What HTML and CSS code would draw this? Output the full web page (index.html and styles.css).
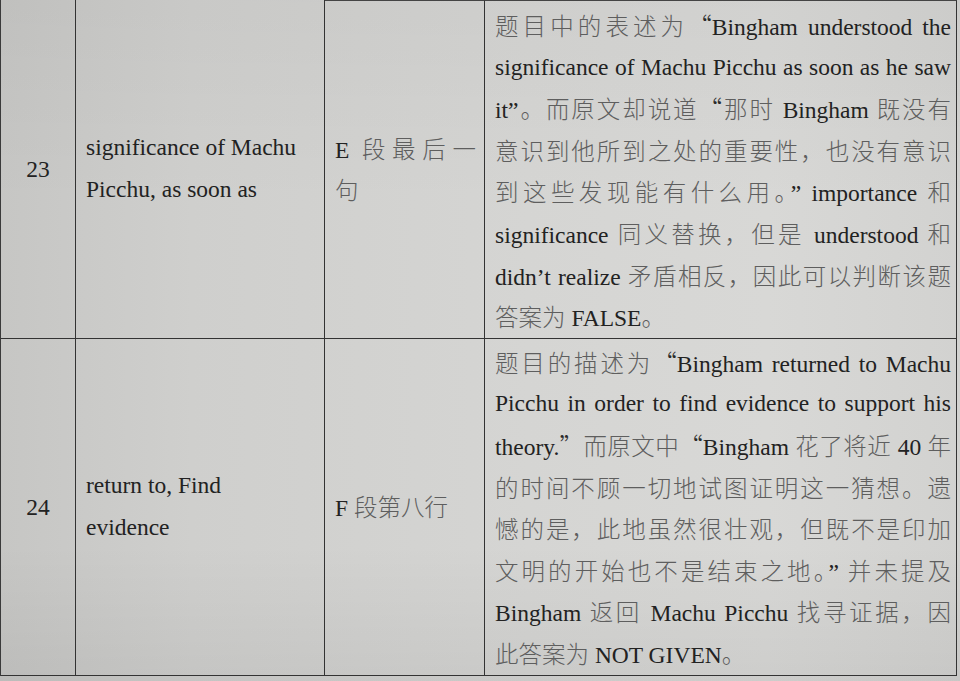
FILE: index.html
```html
<!DOCTYPE html>
<html lang="zh-CN">
<head>
<meta charset="utf-8">
<title>答案解析</title>
<link rel="stylesheet" href="styles.css">
</head>
<body>
<div class="page">
  <div class="table">
    <div class="cell num">23</div>
    <div class="cell key">
      <div class="ln">significance of Machu</div>
      <div class="ln">Picchu, as soon as</div>
    </div>
    <div class="cell loc top">
      <div class="ln j">E <span class="zh">段最后一</span></div>
      <div class="ln"><span class="zh">句</span></div>
    </div>
    <div class="cell exp top first">
      <div class="ln j"><span class="zh">题目中的表述为</span><span class="q">“</span>Bingham understood the</div>
      <div class="ln j">significance of Machu Picchu as soon as he saw</div>
      <div class="ln j">it”<span class="zh">。而原文却说道</span><span class="q">“</span><span class="zh">那时</span> Bingham <span class="zh">既没有</span></div>
      <div class="ln j"><span class="zh">意识到他所到之处的重要性，也没有意识</span></div>
      <div class="ln j"><span class="zh">到这些发现能有什么用。</span>” importance <span class="zh">和</span></div>
      <div class="ln j">significance <span class="zh">同义替换，但是</span> understood <span class="zh">和</span></div>
      <div class="ln j">didn’t realize <span class="zh">矛盾相反，因此可以判断该题</span></div>
      <div class="ln"><span class="zh">答案为</span> FALSE<span class="zh">。</span></div>
    </div>

    <div class="cell num">24</div>
    <div class="cell key">
      <div class="ln">return to, Find</div>
      <div class="ln">evidence</div>
    </div>
    <div class="cell loc">
      <div class="ln">F <span class="zh">段第八行</span></div>
    </div>
    <div class="cell exp second">
      <div class="ln j"><span class="zh">题目的描述为</span><span class="q">“</span>Bingham returned to Machu</div>
      <div class="ln j">Picchu in order to find evidence to support his</div>
      <div class="ln j">theory.<span class="q">”</span><span class="zh">而原文中</span><span class="q">“</span>Bingham <span class="zh">花了将近</span> 40 <span class="zh">年</span></div>
      <div class="ln j"><span class="zh">的时间不顾一切地试图证明这一猜想。遗</span></div>
      <div class="ln j"><span class="zh">憾的是，此地虽然很壮观，但既不是印加</span></div>
      <div class="ln j"><span class="zh">文明的开始也不是结束之地。</span>” <span class="zh">并未提及</span></div>
      <div class="ln j">Bingham <span class="zh">返回</span> Machu Picchu <span class="zh">找寻证据，因</span></div>
      <div class="ln"><span class="zh">此答案为</span> NOT GIVEN<span class="zh">。</span></div>
    </div>
  </div>
</div>
</body>
</html>
```

FILE: styles.css
```css
* {
  box-sizing: border-box;
}

html, body {
  margin: 0;
  padding: 0;
}

body {
  width: 960px;
  height: 681px;
  overflow: hidden;
  background:
    linear-gradient(180deg, rgba(0,0,0,0.03) 0%, rgba(0,0,0,0) 30%, rgba(0,0,0,0) 80%, rgba(0,0,0,0.05) 100%),
    linear-gradient(90deg, #c6c6c4 0%, #cfcfcd 20%, #d5d5d3 55%, #d8d8d6 80%, #d2d2d0 100%);
  font-family: "Liberation Serif", "Noto Sans CJK SC", serif;
  font-size: 23.5px;
  color: #222;
}

.page {
  width: 960px;
  height: 681px;
}

.table {
  display: grid;
  grid-template-columns: 75px 249px 160px 472px;
  width: 957.5px;
  border-left: 1.5px solid #3a3a3a;
}

.cell {
  border-right: 1.5px solid #333;
  border-bottom: 1.5px solid #333;
  display: flex;
  flex-direction: column;
  justify-content: center;
}

.cell.top {
  border-top: 1.5px solid #444;
}

.ln {
  line-height: 41.6px;
  height: 41.6px;
  white-space: nowrap;
}

.ln.j {
  white-space: normal;
  text-align: justify;
  text-align-last: justify;
}

.zh {
  color: #5e5e5e;
  font-family: "Noto Sans CJK SC", sans-serif;
  font-weight: 300;
}

.q {
  color: #2a2a2a;
  font-family: "Noto Sans CJK SC", sans-serif;
  font-weight: 300;
}

.num {
  align-items: center;
  padding-top: 2px;
}

.key {
  padding-left: 10px;
  padding-right: 6px;
}

.loc {
  padding-left: 10px;
  padding-right: 8px;
}

.exp {
  justify-content: flex-start;
  padding-left: 10px;
  padding-right: 5px;
}

.exp.first {
  padding-top: 4px;
}

.exp.second {
  padding-top: 3px;
}
```
